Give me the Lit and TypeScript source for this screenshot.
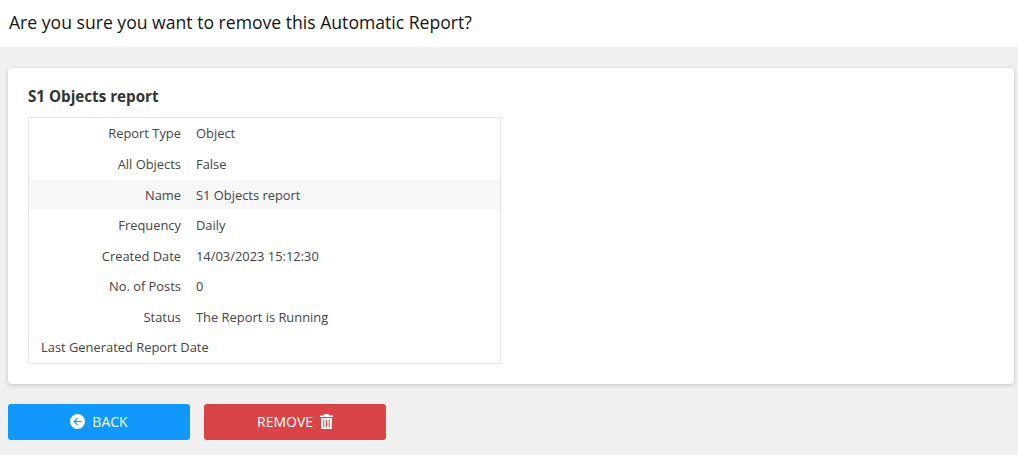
import { LitElement, html, css } from "lit";
import { customElement } from "lit/decorators.js";

const rows: [string, string][] = [
  ["Report Type", "Object"],
  ["All Objects", "False"],
  ["Name", "S1 Objects report"],
  ["Frequency", "Daily"],
  ["Created Date", "14/03/2023 15:12:30"],
  ["No. of Posts", "0"],
  ["Status", "The Report is Running"],
];

@customElement("app-root")
export class AppRoot extends LitElement {
  static styles = css`
    :host { display: block; width: 1018px; height: 455px; background: #f0f0f0; font-family: "Open Sans", sans-serif; color: #333; overflow: hidden; }
    .top { height: 47px; box-sizing: border-box; background: #fff; padding: 0 9px; display: flex; align-items: center; }
    .top h1 { margin: 0 0 4px; font: 400 17.6px "Open Sans", sans-serif; color: #141414; }
    .body { padding: 21px 4px 0 8px; }
    .card { background: #fff; border-radius: 4px; box-shadow: 0 1px 4px rgba(0,0,0,.2); padding: 19px 20px 20px; height: 316px; box-sizing: border-box; }
    h2 { margin: 0 0 12px; font: 700 15.2px/18px "Open Sans", sans-serif; color: #333; }
    .table { width: 473px; box-sizing: border-box; border: 1px solid #e6e6e6; display: grid; grid-template-columns: 152px 1fr; grid-template-rows: 31px 31px 30px 31px 30px 31px 30px 31px; font-size: 12.9px; line-height: 30px; color: #444; }
    .row { display: grid; grid-template-columns: subgrid; grid-column: 1 / -1; align-items: start; }
    .row.hl { background: #f7f7f7; }
    .k { text-align: right; white-space: nowrap; }
    .v { padding-left: 15px; }
    .last { grid-column: 1 / -1; padding-left: 12px; white-space: nowrap; }
    .actions { display: flex; gap: 14px; margin-top: 20px; }
    .btn { width: 182px; height: 36px; border: 0; border-radius: 3px; color: #fff; display: flex; align-items: center; justify-content: center; gap: 7px; font: 400 14px "Open Sans", sans-serif; padding: 0 0 1px; box-sizing: border-box; }
    .back { background: #1098fc; }
    .remove { background: #d94446; }
    svg { display: block; fill: #fff; }
  `;

  render() {
    return html`
      <div class="top"><h1>Are you sure you want to remove this Automatic Report?</h1></div>
      <div class="body">
        <div class="card">
          <h2>S1 Objects report</h2>
          <div class="table">
            ${rows.map(([k, v]) => html`
              <div class="row ${k === "Name" ? "hl" : ""}">
                <div class="k">${k}</div>
                <div class="v">${v}</div>
              </div>`)}
            <div class="last">Last Generated Report Date</div>
          </div>
        </div>
        <div class="actions">
          <button class="btn back">
            <svg width="15" height="15" viewBox="0 0 15 15"><path fill-rule="evenodd" d="M7.500 0a7.500 7.500 0 1 1 0 15a7.500 7.500 0 0 1 0-15zM7.200 3.700L3.400 7.500l3.800 3.800.8-.8-2.400-2.400H11.500V6.900H5.600L8 4.500z"/></svg>
            BACK
          </button>
          <button class="btn remove">
            REMOVE
            <svg width="13" height="15" viewBox="0 0 13 15"><path fill-rule="evenodd" d="M4.500 0h4l1 1.500H13V3H0V1.500h3.500zM1 4h11v9.500A1.500 1.500 0 0 1 10.500 15h-8A1.500 1.500 0 0 1 1 13.500zM3.300 5.500v8h1v-8zM6 5.500v8h1v-8zM8.700 5.500v8h1v-8z"/></svg>
          </button>
        </div>
      </div>
    `;
  }
}
